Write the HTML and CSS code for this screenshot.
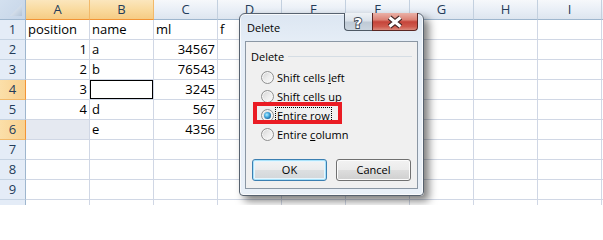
FILE: index.html
```html
<!DOCTYPE html>
<html>
<head>
<meta charset="utf-8">
<title>Delete</title>
<link rel="stylesheet" href="styles.css">
</head>
<body>
<div class="sheet">
  <div class="corner"><svg width="25" height="19" viewBox="0 0 25 19"><defs><linearGradient id="tg" x1="0" y1="0" x2="1" y2="1"><stop offset="0" stop-color="#f4f7fb"/><stop offset="1" stop-color="#b3c4d8"/></linearGradient></defs><polygon points="10,16 22,16 22,4" fill="url(#tg)"/></svg></div>
  <div class="ch sel">A</div><div class="ch sel">B</div><div class="ch">C</div><div class="ch">D</div><div class="ch">E</div><div class="ch">F</div><div class="ch">G</div><div class="ch">H</div><div class="ch">I</div><div class="ch"></div>

  <div class="rh">1</div><div class="c">position</div><div class="c">name</div><div class="c">ml</div><div class="c">f</div><div class="c"></div><div class="c"></div><div class="c"></div><div class="c"></div><div class="c"></div><div class="c"></div>

  <div class="rh">2</div><div class="c n">1</div><div class="c">a</div><div class="c n">34567</div><div class="c"></div><div class="c"></div><div class="c"></div><div class="c"></div><div class="c"></div><div class="c"></div><div class="c"></div>

  <div class="rh">3</div><div class="c n">2</div><div class="c">b</div><div class="c n">76543</div><div class="c"></div><div class="c"></div><div class="c"></div><div class="c"></div><div class="c"></div><div class="c"></div><div class="c"></div>

  <div class="rh sel">4</div><div class="c n">3</div><div class="c active"></div><div class="c n">3245</div><div class="c"></div><div class="c"></div><div class="c"></div><div class="c"></div><div class="c"></div><div class="c"></div><div class="c"></div>

  <div class="rh">5</div><div class="c n">4</div><div class="c">d</div><div class="c n">567</div><div class="c"></div><div class="c"></div><div class="c"></div><div class="c"></div><div class="c"></div><div class="c"></div><div class="c"></div>

  <div class="rh sel">6</div><div class="c hl"></div><div class="c">e</div><div class="c n">4356</div><div class="c"></div><div class="c"></div><div class="c"></div><div class="c"></div><div class="c"></div><div class="c"></div><div class="c"></div>

  <div class="rh">7</div><div class="c"></div><div class="c"></div><div class="c"></div><div class="c"></div><div class="c"></div><div class="c"></div><div class="c"></div><div class="c"></div><div class="c"></div><div class="c"></div>

  <div class="rh">8</div><div class="c"></div><div class="c"></div><div class="c"></div><div class="c"></div><div class="c"></div><div class="c"></div><div class="c"></div><div class="c"></div><div class="c"></div><div class="c"></div>

  <div class="rh">9</div><div class="c"></div><div class="c"></div><div class="c"></div><div class="c"></div><div class="c"></div><div class="c"></div><div class="c"></div><div class="c"></div><div class="c"></div><div class="c"></div>

  <div class="rh rh-last"></div><div class="c"></div><div class="c"></div><div class="c"></div><div class="c"></div><div class="c"></div><div class="c"></div><div class="c"></div><div class="c"></div><div class="c"></div><div class="c"></div>
</div>

<div class="dialog">
  <div class="titlebar">
    <span class="title">Delete</span>
    <div class="caption">
      <div class="cap help"><svg width="28" height="18" viewBox="0 0 28 18"><text x="14" y="14.5" text-anchor="middle" class="qm">?</text></svg></div>
      <div class="cap close"><svg width="46" height="18" viewBox="0 0 46 18"><path d="M17.5 4.5 L28.5 13.5 M28.5 4.5 L17.5 13.5" class="x-out"/><path d="M17.5 4.5 L28.5 13.5 M28.5 4.5 L17.5 13.5" class="x-in"/></svg></div>
    </div>
  </div>
  <div class="client">
    <div class="group">
      <div class="group-head"><span>Delete</span><i class="rule"></i></div>
      <div class="opts">
        <div class="opt"><span class="radio"></span><span>Shift cells <u>l</u>eft</span></div>
        <div class="opt"><span class="radio"></span><span>Shift cells <u>u</u>p</span></div>
        <div class="opt"><span class="radio on"></span><span class="focus">Entire <u>r</u>ow</span><span class="mark"></span></div>
        <div class="opt"><span class="radio"></span><span>Entire <u>c</u>olumn</span></div>
      </div>
    </div>
    <div class="buttons">
      <div class="btn default">OK</div>
      <div class="btn">Cancel</div>
    </div>
  </div>
</div>
</body>
</html>
```

FILE: styles.css
```css
* { box-sizing: border-box; }
html, body { margin: 0; padding: 0; }
body {
  width: 603px;
  height: 205px;
  overflow: hidden;
  position: relative;
  background: #fff;
  font-family: "Open Sans", "Liberation Sans", sans-serif;
}

/* ---------- spreadsheet ---------- */
.sheet {
  display: grid;
  grid-template-columns: 26px repeat(9, 64px) 1fr;
  grid-auto-rows: 20px;
  width: 603px;
  height: 205px;
  overflow: hidden;
  font-size: 13px;
  line-height: 18px;
  color: #000;
}
.c {
  border-right: 1px solid #d0d7e5;
  border-bottom: 1px solid #d0d7e5;
  padding: 0 2px;
  white-space: nowrap;
  overflow: hidden;
}
.n { text-align: right; }
.hl { background: #e5e9f1; }
.active { box-shadow: inset 0 0 0 1px #000; }

.corner {
  border-right: 1px solid #9eb6ce;
  border-bottom: 1px solid #9eb6ce;
  background: linear-gradient(135deg, #d3e0ef 0%, #c6d5e8 100%);
}
.corner svg { display: block; }

.ch {
  border-right: 1px solid #c3d0df;
  border-bottom: 1px solid #9eb6ce;
  background: linear-gradient(to bottom, #f6f8fb 0%, #e8eef6 55%, #dde5ef 100%);
  text-align: center;
  line-height: 19px;
  color: #243c5a;
}
.ch.sel {
  background: linear-gradient(to bottom, #fbe6bd 0%, #f9d99c 55%, #f6cc84 100%);
  border-right-color: #f2b96a;
  border-bottom-color: #f29436;
}
.rh {
  border-right: 1px solid #9eb6ce;
  border-bottom: 1px solid #c5d3e3;
  background: #e4ecf7;
  text-align: center;
  color: #243c5a;
}
.rh.sel {
  background: linear-gradient(to right, #fbdfa9, #f8d190);
  border-right-color: #f29436;
  border-bottom-color: #f2b96a;
}

/* ---------- dialog ---------- */
.dialog {
  position: absolute;
  left: 239px;
  top: 13px;
  width: 185px;
  height: 183px;
  border: 1px solid #57626f;
  border-radius: 6px 6px 4px 4px;
  padding: 27px 5px 6px 5px;
  background: linear-gradient(to bottom, #dce6f2 0%, #e6eef7 30px, #e9f0f8 100%);
  box-shadow: inset 0 0 0 1px rgba(255,255,255,0.75), 5px 5px 9px rgba(0,0,0,0.5);
  font-size: 11px;
  color: #000;
}
.titlebar {
  position: absolute;
  left: 0;
  top: 0;
  right: 0;
  height: 27px;
}
.title {
  position: absolute;
  left: 7px;
  top: 6px;
  font-size: 11px;
  line-height: 15px;
}
.caption {
  position: absolute;
  top: -1px;
  right: 5px;
  display: flex;
}
.cap {
  height: 18px;
  border: 1px solid #4f5a66;
  border-top: none;
}
.cap svg { display: block; margin: 0 -1px; }
.help {
  width: 28px;
  border-radius: 0 0 0 4px;
  border-right: none;
  background: linear-gradient(to bottom, #eef2f6 0%, #dbe2ea 45%, #bfcad6 55%, #cbd5df 100%);
}
.close {
  width: 46px;
  border-radius: 0 0 4px 0;
  border-color: #5a2623;
  background: linear-gradient(to bottom, #eab1a7 0%, #dc8275 40%, #c5443a 52%, #cf5a4d 80%, #db8a7d 100%);
}
.qm {
  font-family: "DejaVu Sans", sans-serif;
  font-weight: bold;
  font-size: 14px;
  fill: #fff;
  stroke: #404a55;
  stroke-width: 1.8px;
  paint-order: stroke;
}
.x-out { stroke: #3a2020; stroke-width: 5.4; stroke-linecap: butt; fill: none; }
.x-in { stroke: #fff; stroke-width: 3; stroke-linecap: butt; fill: none; }

.client {
  height: 148px;
  border: 1px solid #8b97a4;
  background: #f0f0f0;
  padding: 6px 6px 7px 6px;
  display: flex;
  flex-direction: column;
}
.group-head {
  display: flex;
  align-items: center;
  height: 16px;
  margin-left: -1px;
  gap: 4px;
}
.rule {
  flex: 1;
  height: 1px;
  background: #d5dde4;
  margin-right: -1px;
}
.opts {
  margin-top: 4px;
  display: flex;
  flex-direction: column;
}
.opt {
  position: relative;
  display: flex;
  align-items: center;
  height: 19px;
  padding-left: 9px;
  gap: 3px;
  white-space: nowrap;
}
.radio {
  position: relative;
  width: 13px;
  height: 13px;
  flex: none;
  border-radius: 50%;
  border: 1px solid #8e8f8f;
  background: linear-gradient(135deg, #d2d2d2 0%, #ececec 50%, #fbfbfb 100%);
  box-shadow: inset 0 0 0 1px #f6f6f6;
}
.radio.on::after {
  content: "";
  position: absolute;
  left: 2px;
  top: 2px;
  width: 7px;
  height: 7px;
  border-radius: 50%;
  background: radial-gradient(circle at 40% 40%, #b9ecfc 0%, #4fb4e6 35%, #1f6ca6 70%, #174f80 100%);
}
.focus {
  outline: 1px dotted #000;
  padding: 0 1px;
  margin-left: -1px;
}
.mark {
  position: absolute;
  left: 1px;
  top: -4px;
  width: 89px;
  height: 22px;
  border: 4px solid #ea1c24;
}

.buttons {
  margin-top: auto;
  display: flex;
  gap: 9px;
}
.btn {
  width: 75px;
  height: 22px;
  border: 1px solid #707070;
  border-radius: 3px;
  background: linear-gradient(to bottom, #f2f2f2 0%, #ebebeb 48%, #dddddd 52%, #cfcfcf 100%);
  box-shadow: inset 0 0 0 1px #fcfcfc;
  text-align: center;
  line-height: 20px;
}
.btn.default {
  border-color: #3c7fb1;
  box-shadow: inset 0 0 0 1px #a8e2fa, inset 0 0 0 2px #e6f5fd;
  background: linear-gradient(to bottom, #f2f4f5 0%, #ebeced 48%, #dcdfe1 52%, #d2d6d9 100%);
}
```
